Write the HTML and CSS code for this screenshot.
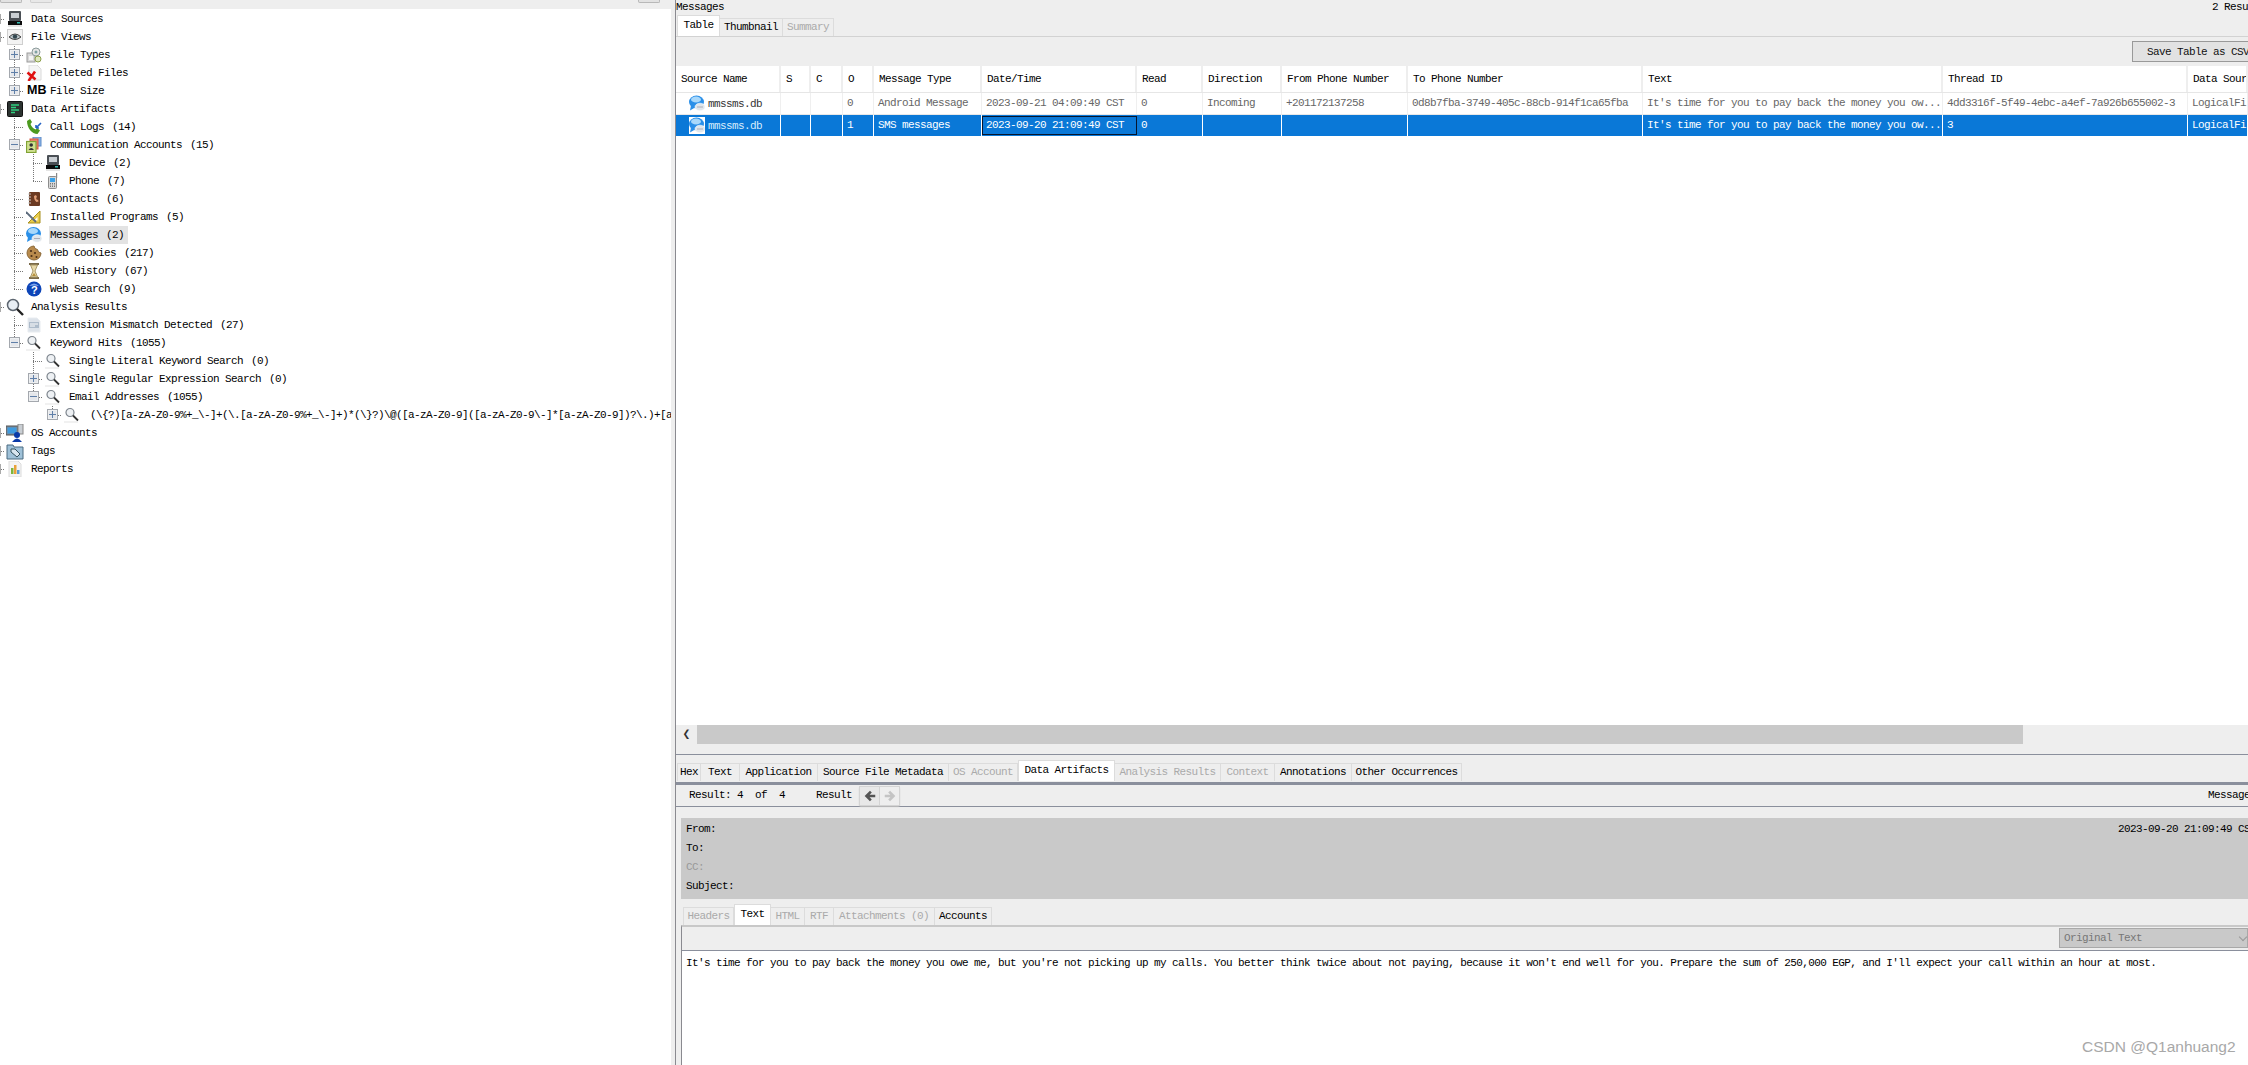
FILE: index.html
```html
<!DOCTYPE html>
<html lang="en">
<head>
<meta charset="utf-8">
<title>Autopsy - Messages</title>
<link rel="stylesheet" href="styles.css">
</head>
<body>
<svg class="defs" width="0" height="0" aria-hidden="true">
  <symbol id="i-drive" viewBox="0 0 16 16"><rect x="2" y="0" width="12" height="10" rx="1" fill="#4a4f55"/><rect x="4" y="2" width="8" height="5" fill="#c9ced3"/><path d="M1 10h14v4H1z" fill="#0c0c0c"/><rect x="10" y="11" width="3" height="1.5" fill="#35b8b0"/><rect x="1" y="14" width="14" height="2" fill="#e4e4e4"/></symbol>
  <symbol id="i-eye" viewBox="0 0 16 16"><rect x=".5" y=".5" width="15" height="15" fill="#f3f3f3" stroke="#cfcfcf"/><path d="M2 8q6-6 12 0q-6 5-12 0z" fill="#b9c4c9" stroke="#444"/><circle cx="8" cy="7.6" r="2.2" fill="#33474f"/></symbol>
  <symbol id="i-types" viewBox="0 0 16 16"><rect x="1" y="6" width="8" height="9" fill="#d8d8d8" stroke="#9b9b9b"/><circle cx="10" cy="5" r="4" fill="#e5e5e5" stroke="#8a9a9a"/><circle cx="10" cy="5" r="1.5" fill="#7fa2a2"/><circle cx="12" cy="12" r="3" fill="#dfe8c0" stroke="#8ca04a"/><rect x="3" y="9" width="4" height="4" fill="#f4f4f4"/></symbol>
  <symbol id="i-del" viewBox="0 0 16 16"><path d="M3 0h8l4 4v11H3z" fill="#f5f5f5" stroke="#dadada"/><path d="M1.5 7.5l8 7M9 6.500L2.500 16" stroke="#e01010" stroke-width="2.600" fill="none"/></symbol>
  <symbol id="i-art" viewBox="0 0 16 16"><rect x=".5" y=".5" width="15" height="15" rx="1" fill="#2c3330" stroke="#111"/><path d="M4 4h8M4 6.500h5M4 9h8M4 11.500h4" stroke="#2fd07f" stroke-width="1.400"/></symbol>
  <symbol id="i-call" viewBox="0 0 16 16"><path d="M1 2l3-2 2 3-1.500 2c.8 2.500 2.500 4.500 5 5.500L11 9l3 2.500-2.500 3.500C6 15 1 9 1 2z" fill="#4c9a1f"/><path d="M15 4l-5 5M10 9V6M10 9h3" stroke="#2563c4" stroke-width="1.600" fill="none"/></symbol>
  <symbol id="i-comm" viewBox="0 0 16 16"><rect x="7" y="0" width="8" height="9" fill="#8ab4e8" stroke="#5f8cc7"/><rect x="4" y="2" width="8" height="10" fill="#f07f6a" stroke="#d6563f"/><rect x=".5" y="4.500" width="9.500" height="11" fill="#cfe08f" stroke="#80a234" stroke-width="1.200"/><circle cx="5.200" cy="8" r="1.800" fill="#333"/><path d="M2.500 13q2.700-4 5.500 0z" fill="#333"/></symbol>
  <symbol id="i-phone" viewBox="0 0 16 16"><rect x="3.500" y="3.500" width="8" height="12" rx="1" fill="#d8d8d8" stroke="#8c8c8c"/><rect x="11" y="0" width="1.200" height="5" fill="#888"/><rect x="5" y="5" width="5" height="4" fill="#3aa2ea"/><path d="M5 10.500h5M5 12h5M5 13.500h5" stroke="#777" stroke-dasharray="1 1"/></symbol>
  <symbol id="i-book" viewBox="0 0 16 16"><rect x="3" y="1" width="11" height="14" rx="1" fill="#6b3a22"/><path d="M2 3h3M2 6h3M2 9h3M2 12h3" stroke="#ccc"/><path d="M8 5l2-1 1 2-1 1 1 2 1-.5.5 2-2 .5C9 10 8 8 8 5z" fill="#e3a179"/></symbol>
  <symbol id="i-inst" viewBox="0 0 16 16"><path d="M14 2v12H2z" fill="#e8cc4a" stroke="#a88f1d"/><path d="M11.500 8v3.500H8z" fill="#fff"/><path d="M0 3l10 10" stroke="#5c6b7c" stroke-width="1.800"/></symbol>
  <symbol id="i-msg" viewBox="0 0 16 16"><ellipse cx="7.500" cy="6.500" rx="7.500" ry="6.500" fill="#2a8fe8"/><ellipse cx="7" cy="4" rx="5" ry="3" fill="#a8d8fb"/><path d="M2 10l-1 5 5-3z" fill="#2a8fe8"/><ellipse cx="11" cy="11.500" rx="5" ry="3.800" fill="#dfe6ec" stroke="#fff" stroke-width=".6"/><path d="M8.500 11.500h1M10.500 11.500h1M12.500 11.500h1" stroke="#778"/></symbol>
  <symbol id="i-cookie" viewBox="0 0 16 16"><path d="M8 1a7 7 0 1 0 7 7l-2.500-1-1-2.500L9 3.500z" fill="#b88a4c" stroke="#8c6a3a"/><circle cx="5" cy="6" r="1.100" fill="#4a2f18"/><circle cx="9" cy="8" r="1.100" fill="#4a2f18"/><circle cx="5.500" cy="11" r="1.100" fill="#4a2f18"/><circle cx="10.500" cy="12" r="1" fill="#4a2f18"/></symbol>
  <symbol id="i-glass" viewBox="0 0 16 16"><path d="M3 1h10M3 15h10" stroke="#7a6a4a" stroke-width="2"/><path d="M4.500 2h7L9 8l2.500 6h-7L7 8z" fill="#e8d9aa" stroke="#a89767"/><path d="M6 13h4L8 10z" fill="#b58f3c"/></symbol>
  <symbol id="i-help" viewBox="0 0 16 16"><circle cx="8" cy="8" r="7.500" fill="#0d45b8"/><path d="M3 5q5-5 10 0q-5-1-10 0z" fill="#7ea6ec"/><text x="8" y="12.500" text-anchor="middle" font-family="Liberation Sans" font-weight="700" font-size="11" fill="#fff">?</text></symbol>
  <symbol id="i-mag" viewBox="0 0 18 18"><circle cx="7" cy="7" r="5.500" fill="#e8eef4" stroke="#5d6670" stroke-width="1.500"/><path d="M11 11l6 6" stroke="#222" stroke-width="2.400"/></symbol>
  <symbol id="i-ext" viewBox="0 0 16 16"><path d="M2 1h9l3 3v11H2z" fill="#dde3ea" stroke="#e8ecf0"/><rect x="3" y="5" width="10" height="6" fill="#aebccb"/><path d="M4 7h8M4 9h5" stroke="#fff"/></symbol>
  <symbol id="i-kw" viewBox="0 0 16 16"><circle cx="6" cy="5.500" r="4" fill="#eef1f4" stroke="#7d858d" stroke-width="1.200"/><path d="M9 8.500l5 5" stroke="#333" stroke-width="1.800"/><path d="M0 15h14" stroke="#ececec" stroke-width="1.500"/></symbol>
  <symbol id="i-os" viewBox="0 0 18 18"><rect x="0" y="2" width="12" height="9" fill="#7a8a9a" stroke="#555"/><rect x="1.500" y="3.500" width="9" height="6" fill="#3f9be0"/><rect x="12" y="0" width="5" height="10" fill="#c9ced3" stroke="#888"/><circle cx="11" cy="11" r="3" fill="#0a3aa8"/><path d="M6 18q5-7 10 0z" fill="#0a3aa8"/></symbol>
  <symbol id="i-tag" viewBox="0 0 18 18"><path d="M1 3h6l1 2h9v12H1z" fill="#9fc1d8" stroke="#4a6a80"/><path d="M5 7h4l5 5-3 3-6-5z" fill="#d7e5ef" stroke="#33505f"/></symbol>
  <symbol id="i-rep" viewBox="0 0 16 16"><path d="M2 0h9l3 3v13H2z" fill="#f4f4f4" stroke="#dcdcdc"/><rect x="4" y="7" width="2.500" height="6" fill="#7fb53c"/><rect x="7" y="4" width="2.500" height="9" fill="#e9a23a"/><rect x="10" y="9" width="2.500" height="4" fill="#5a9bd5"/></symbol>
  <symbol id="i-back" viewBox="0 0 16 16"><path d="M14 8H5M9 3L4 8l5 5" stroke="currentColor" stroke-width="3" fill="none"/></symbol>
  <symbol id="i-next" viewBox="0 0 16 16"><path d="M2 8h9M7 3l5 5-5 5" stroke="currentColor" stroke-width="3" fill="none"/></symbol>
</svg>

<div class="app">
  <aside class="left">
    <div class="left-top">
      <span class="stub"></span><span class="stub stub-b"></span><span class="stub stub-r"></span>
    </div>
    <div class="tree">
      <div class="row"><i class="c0 h"></i><svg class="ico"><use href="#i-drive"/></svg><span>Data Sources</span></div>
      <div class="row"><i class="c0 h"></i><svg class="ico"><use href="#i-eye"/></svg><span>File Views</span></div>
      <div class="row"><i class="c0"></i><i class="c t"><b class="exp plus"></b></i><svg class="ico"><use href="#i-types"/></svg><span>File Types</span></div>
      <div class="row"><i class="c0"></i><i class="c t"><b class="exp plus"></b></i><svg class="ico"><use href="#i-del"/></svg><span>Deleted Files</span></div>
      <div class="row"><i class="c0"></i><i class="c l"><b class="exp plus"></b></i><b class="mb">MB</b><span>File Size</span></div>
      <div class="row"><i class="c0 h"></i><svg class="ico"><use href="#i-art"/></svg><span>Data Artifacts</span></div>
      <div class="row"><i class="c0"></i><i class="c t"></i><svg class="ico"><use href="#i-call"/></svg><span>Call Logs <em>(14)</em></span></div>
      <div class="row"><i class="c0"></i><i class="c t"><b class="exp minus"></b></i><svg class="ico"><use href="#i-comm"/></svg><span>Communication Accounts <em>(15)</em></span></div>
      <div class="row"><i class="c0"></i><i class="c v"></i><i class="c t"></i><svg class="ico"><use href="#i-drive"/></svg><span>Device <em>(2)</em></span></div>
      <div class="row"><i class="c0"></i><i class="c v"></i><i class="c l"></i><svg class="ico"><use href="#i-phone"/></svg><span>Phone <em>(7)</em></span></div>
      <div class="row"><i class="c0"></i><i class="c t"></i><svg class="ico"><use href="#i-book"/></svg><span>Contacts <em>(6)</em></span></div>
      <div class="row"><i class="c0"></i><i class="c t"></i><svg class="ico"><use href="#i-inst"/></svg><span>Installed Programs <em>(5)</em></span></div>
      <div class="row"><i class="c0"></i><i class="c t"></i><svg class="ico"><use href="#i-msg"/></svg><span class="sel">Messages <em>(2)</em></span></div>
      <div class="row"><i class="c0"></i><i class="c t"></i><svg class="ico"><use href="#i-cookie"/></svg><span>Web Cookies <em>(217)</em></span></div>
      <div class="row"><i class="c0"></i><i class="c t"></i><svg class="ico"><use href="#i-glass"/></svg><span>Web History <em>(67)</em></span></div>
      <div class="row"><i class="c0"></i><i class="c l"></i><svg class="ico"><use href="#i-help"/></svg><span>Web Search <em>(9)</em></span></div>
      <div class="row"><i class="c0 h"></i><svg class="ico ico-lg"><use href="#i-mag"/></svg><span>Analysis Results</span></div>
      <div class="row"><i class="c0"></i><i class="c t"></i><svg class="ico"><use href="#i-ext"/></svg><span>Extension Mismatch Detected <em>(27)</em></span></div>
      <div class="row"><i class="c0"></i><i class="c l"><b class="exp minus"></b></i><svg class="ico"><use href="#i-kw"/></svg><span>Keyword Hits <em>(1055)</em></span></div>
      <div class="row"><i class="c0"></i><i class="c"></i><i class="c t"></i><svg class="ico"><use href="#i-kw"/></svg><span>Single Literal Keyword Search <em>(0)</em></span></div>
      <div class="row"><i class="c0"></i><i class="c"></i><i class="c t"><b class="exp plus"></b></i><svg class="ico"><use href="#i-kw"/></svg><span>Single Regular Expression Search <em>(0)</em></span></div>
      <div class="row"><i class="c0"></i><i class="c"></i><i class="c l"><b class="exp minus"></b></i><svg class="ico"><use href="#i-kw"/></svg><span>Email Addresses <em>(1055)</em></span></div>
      <div class="row"><i class="c0"></i><i class="c"></i><i class="c"></i><i class="c l"><b class="exp plus"></b></i><svg class="ico"><use href="#i-kw"/></svg><span class="regex">(\{?)[a-zA-Z0-9%+_\-]+(\.[a-zA-Z0-9%+_\-]+)*(\}?)\@([a-zA-Z0-9]([a-zA-Z0-9\-]*[a-zA-Z0-9])?\.)+[a-zA-Z]{2,4}</span></div>
      <div class="row"><i class="c0 h"></i><svg class="ico ico-lg"><use href="#i-os"/></svg><span>OS Accounts</span></div>
      <div class="row"><i class="c0 h"></i><svg class="ico ico-lg"><use href="#i-tag"/></svg><span>Tags</span></div>
      <div class="row"><i class="c0 h"></i><svg class="ico"><use href="#i-rep"/></svg><span>Reports</span></div>
    </div>
  </aside>

  <main class="right">
    <div class="title"><span class="title-l">Messages</span><span>2 Results</span></div>
    <div class="tabs tabs-top">
      <span class="tab on">Table</span><span class="tab">Thumbnail</span><span class="tab off">Summary</span>
    </div>
    <div class="savebar"><button class="save" type="button">Save Table as CSV</button></div>

    <div class="table">
      <div class="tr th">
        <span>Source Name</span><span>S</span><span>C</span><span>O</span><span>Message Type</span><span>Date/Time</span><span>Read</span><span>Direction</span><span>From Phone Number</span><span>To Phone Number</span><span>Text</span><span>Thread ID</span><span>Data Source</span>
      </div>
      <div class="tr td">
        <span class="src"><svg class="ico-cell"><use href="#i-msg"/></svg>mmssms.db</span><span></span><span></span><span>0</span><span>Android Message</span><span>2023-09-21 04:09:49 CST</span><span>0</span><span>Incoming</span><span>+201172137258</span><span>0d8b7fba-3749-405c-88cb-914f1ca65fba</span><span>It's time for you to pay back the money you ow...</span><span>4dd3316f-5f49-4ebc-a4ef-7a926b655002-3</span><span>LogicalFileSet1</span>
      </div>
      <div class="tr td picked">
        <span class="src"><svg class="ico-cell"><use href="#i-msg"/></svg>mmssms.db</span><span></span><span></span><span>1</span><span>SMS messages</span><span class="focus">2023-09-20 21:09:49 CST</span><span>0</span><span></span><span></span><span></span><span>It's time for you to pay back the money you ow...</span><span>3</span><span>LogicalFileSet1</span>
      </div>
    </div>

    <div class="hscroll"><span class="arrow">&#10094;</span><span class="thumb"></span></div>
    <div class="split"></div>

    <div class="tabs tabs-mid">
      <span class="tab w24">Hex</span><span class="tab w39">Text</span><span class="tab w78">Application</span><span class="tab w131">Source File Metadata</span><span class="tab w69 off">OS Account</span><span class="tab w97 on">Data Artifacts</span><span class="tab w106 off">Analysis Results</span><span class="tab w54 off">Context</span><span class="tab w77">Annotations</span><span class="tab w110">Other Occurrences</span>
    </div>

    <div class="resbar">
      <span class="res">Result: 4  of  4</span>
      <span class="res-b">Result</span>
      <span class="nav"><span class="nav-b"><svg class="nav-i"><use href="#i-back"/></svg></span><span class="nav-n"><svg class="nav-i"><use href="#i-next"/></svg></span></span>
      <span class="res-r">Messages</span>
    </div>

    <div class="lower">
      <div class="mhead">
        <div class="mline mline-top"><span class="mfrom">From:</span><span>2023-09-20 21:09:49 CST</span></div>
        <div class="mline">To:</div>
        <div class="mline mute">CC:</div>
        <div class="mline">Subject:</div>
      </div>
      <div class="tabs tabs-low">
        <span class="tab w51 off">Headers</span><span class="tab w37 on">Text</span><span class="tab w34 off">HTML</span><span class="tab w29 off">RTF</span><span class="tab w101 off">Attachments (0)</span><span class="tab w57">Accounts</span>
      </div>
      <div class="viewer">
        <div class="viewbar"><span class="combo">Original Text<span class="caret"></span></span></div>
        <div class="body-text">It's time for you to pay back the money you owe me, but you're not picking up my calls. You better think twice about not paying, because it won't end well for you. Prepare the sum of 250,000 EGP, and I'll expect your call within an hour at most.</div>
      </div>
    </div>
  </main>
</div>
<div class="mark">CSDN @Q1anhuang2</div>
</body>
</html>
```
FILE: styles.css
```css
html, body {
  margin: 0;
  height: 100%;
  overflow: hidden;
  background: #eee;
}
body {
  font-family: "Liberation Mono", "Noto Sans CJK SC", monospace;
  font-size: 11px;
  letter-spacing: -0.6px;
  color: #000;
}
.defs { position: absolute; }
.app {
  display: flex;
  width: 2248px;
  height: 1065px;
}

/* ---------- left tree ---------- */
.left {
  flex: none;
  width: 676px;
  box-sizing: border-box;
  padding-right: 4px;
  border-right: 1px solid #8a8a90;
  height: 100%;
  display: flex;
  flex-direction: column;
}
.left-top {
  height: 9px;
  flex: none;
  display: flex;
  align-items: flex-start;
  gap: 8px;
}
.stub {
  width: 20px;
  height: 2px;
  background: #e2e2e2;
  border: 1px solid #b8b8b8;
  border-top: 0;
  border-radius: 0 0 2px 2px;
}
.stub-b { background: #e8e8e8; border-color: #cfcfcf; }
.stub-r { margin-left: auto; margin-right: 11px; }
.tree {
  flex: 1;
  background: #fff;
  padding-top: 1px;
  overflow: hidden;
}
.row {
  display: flex;
  align-items: center;
  height: 18px;
  white-space: nowrap;
}
.row em { font-style: normal; margin-left: 2px; }
.ico {
  flex: none;
  width: 16px;
  height: 16px;
  margin: 0 8px 0 2px;
}
.ico-lg {
  width: 18px;
  height: 18px;
  margin: 0 7px 0 1px;
}
.mb {
  flex: none;
  width: 23px;
  margin: -2px 0 0 3px;
  font: bold 12.5px "Liberation Sans", sans-serif;
  letter-spacing: 0;
  color: #000;
}
.sel {
  background: #e3e3e3;
  margin-left: -1px;
  padding: 3px 4px 3px 1px;
}
.regex { margin-left: 2px; }

/* tree guide cells */
.c0 { flex: none; width: 5px; height: 18px; }
.c0.h {
  background:
    linear-gradient(#aaa, #aaa) 0 4px / 1px 10px no-repeat,
    repeating-linear-gradient(90deg, #777 0 1px, transparent 1px 2px) 1px 9px / 4px 1px no-repeat;
}
.c {
  flex: none;
  box-sizing: border-box;
  width: 19px;
  height: 18px;
  padding: 3px 0 0 4px;
}
.v {
  background: repeating-linear-gradient(180deg, #777 0 1px, transparent 1px 2px) 9px 0 / 1px 18px no-repeat;
}
.t {
  background:
    repeating-linear-gradient(180deg, #777 0 1px, transparent 1px 2px) 9px 0 / 1px 18px no-repeat,
    repeating-linear-gradient(90deg, #777 0 1px, transparent 1px 2px) 9px 9px / 10px 1px no-repeat;
}
.l {
  background:
    repeating-linear-gradient(180deg, #777 0 1px, transparent 1px 2px) 9px 0 / 1px 9px no-repeat,
    repeating-linear-gradient(90deg, #777 0 1px, transparent 1px 2px) 9px 9px / 10px 1px no-repeat;
}
.exp {
  display: block;
  box-sizing: border-box;
  width: 11px;
  height: 11px;
  border: 1px solid #a4a8ae;
  box-shadow: inset 0 0 0 1px #eef0f2;
  background-color: #e4e6ea;
}
.minus {
  background-image: linear-gradient(#5f7fa8, #5f7fa8);
  background-position: center;
  background-size: 7px 1px;
  background-repeat: no-repeat;
}
.plus {
  background-image: linear-gradient(#5f7fa8, #5f7fa8), linear-gradient(#5f7fa8, #5f7fa8);
  background-position: center, center;
  background-size: 7px 1px, 1px 7px;
  background-repeat: no-repeat;
}

/* ---------- right column ---------- */
.right {
  flex: none;
  width: 1572px;
  height: 100%;
  display: flex;
  flex-direction: column;
  overflow: hidden;
  white-space: nowrap;
}
.title {
  flex: none;
  height: 15px;
  line-height: 14px;
  display: flex;
}
.title-l { flex: none; width: 1536px; }

.tabs {
  flex: none;
  display: flex;
  align-items: flex-end;
}
.tab {
  flex: none;
  box-sizing: border-box;
  height: 18px;
  line-height: 17px;
  text-align: center;
  background: #eee;
  border: 1px solid #dcdcdc;
  border-bottom: 0;
  border-left: 0;
}
.tab.on {
  height: 21px;
  line-height: 19px;
  background: #fff;
  border-left: 1px solid #dcdcdc;
}
.tab.off { color: #aaa; }
.tabs-top {
  height: 21px;
  padding-left: 1px;
  border-bottom: 1px solid #d2d2d2;
}
.tabs-top .tab { width: 63px; }
.tabs-top .tab.on { width: 43px; }
.tabs-top .tab.off { width: 51px; }

.savebar {
  flex: none;
  box-sizing: border-box;
  height: 29px;
  padding: 4px 0 0 1456px;
}
.save {
  display: block;
  width: 140px;
  height: 21px;
  padding: 0 0 0 14px;
  text-align: left;
  font: inherit;
  letter-spacing: inherit;
  color: #111;
  background: #e2e2e2;
  border: 1px solid #999;
}

.table {
  flex: none;
  height: 659px;
  background: #fff;
}
.tr {
  display: grid;
  grid-template-columns: 105px 30px 32px 31px 108px 155px 66px 79px 126px 235px 300px 245px 60px;
}
.tr > span {
  box-sizing: border-box;
  overflow: hidden;
  padding-left: 4px;
}
.th {
  height: 27px;
  line-height: 27px;
  border-bottom: 1px solid #e6e6e6;
  box-sizing: border-box;
}
.th > span {
  padding-left: 5px;
  border-right: 2px solid #eee;
}
.td {
  box-sizing: border-box;
  height: 22px;
  line-height: 20px;
  color: #666;
  border-bottom: 1px solid #e8e8e8;
}
.td > span { border-right: 1px solid #efefef; }
.src {
  display: flex;
  align-items: center;
}
.tr > .src { padding-left: 13px; color: #333; }
.ico-cell {
  flex: none;
  width: 16px;
  height: 17px;
  margin-right: 3px;
}
.picked {
  height: 21px;
  line-height: 20px;
  background: #0a78d7;
  color: #fff;
  border: 0;
}
.picked > span { border-right-color: #fff; }
.tr.picked > .src { color: #d8ecfb; }
.picked .ico-cell { background: #fff; }
.tr > .focus {
  margin: 1px 0;
  height: 19px;
  line-height: 17px;
  padding-left: 3px;
  border: 1px solid #06152c;
}

.hscroll {
  flex: none;
  height: 19px;
  display: flex;
}
.arrow {
  flex: none;
  width: 21px;
  line-height: 19px;
  text-align: center;
  font-size: 13px;
  letter-spacing: 0;
  color: #333;
}
.thumb {
  flex: none;
  width: 1326px;
  height: 19px;
  background: #c9c9c9;
}
.split {
  flex: none;
  height: 11px;
  box-sizing: border-box;
  border-bottom: 1px solid #8a8f9c;
}
.tabs-mid {
  height: 21px;
  margin-top: 5px;
  padding-left: 1px;
}
.w24 { width: 24px; border-left: 1px solid #dcdcdc; }
.w39 { width: 39px; }
.w78 { width: 78px; }
.w131 { width: 131px; }
.w69 { width: 69px; }
.w97 { width: 97px; }
.w106 { width: 106px; }
.w54 { width: 54px; }
.w77 { width: 77px; }
.w110 { width: 110px; }
.w51 { width: 51px; }
.w37 { width: 37px; }
.w34 { width: 34px; }
.w29 { width: 29px; }
.w101 { width: 101px; }
.w57 { width: 57px; }

.resbar {
  flex: none;
  box-sizing: border-box;
  height: 25px;
  margin-top: 1px;
  padding-bottom: 2px;
  border-top: 3px solid #8a8f9c;
  border-bottom: 1px solid #8a8f9c;
  display: flex;
  align-items: center;
}
.res {
  flex: none;
  width: 109px;
  padding-left: 13px;
  white-space: pre;
}
.res-b { flex: none; width: 43px; margin-left: -13px; padding-left: 31px; }
.nav {
  flex: none;
  display: flex;
  width: 41px;
  height: 20px;
  margin-top: 2px;
  border-radius: 2px;
  box-shadow: 0 1px 1px #bbb;
}
.nav-b, .nav-n {
  flex: none;
  box-sizing: border-box;
  width: 21px;
  height: 20px;
  display: flex;
  align-items: center;
  justify-content: center;
  background: #e8e8e8;
  border: 1px solid #d4d4d4;
  color: #555;
}
.nav-n { width: 20px; border-left: 0; background: #eee; color: #c4c4c4; }
.nav-i { width: 14px; height: 14px; }
.res-r { flex: none; margin-left: 1308px; }

.lower {
  flex: 1;
  display: flex;
  flex-direction: column;
  padding: 11px 0 0 5px;
  min-height: 0;
}
.mhead {
  flex: none;
  box-sizing: border-box;
  height: 81px;
  padding: 2px 0 0 5px;
  background: #c9c9c9;
}
.mline { height: 19px; line-height: 18px; }
.mline-top { display: flex; }
.mfrom { flex: none; width: 1432px; }
.mute { color: #999; }
.tabs-low {
  height: 21px;
  margin-top: 5px;
  padding-left: 2px;
}
.tabs-low .tab:first-child { border-left: 1px solid #dcdcdc; }
.viewer {
  flex: 1;
  display: flex;
  flex-direction: column;
  border-left: 1px solid #8a8a90;
  border-top: 2px solid #c8c8c8;
}
.viewbar {
  flex: none;
  box-sizing: border-box;
  height: 24px;
  padding: 1px 0 0 1377px;
  border-bottom: 1px solid #8a8f9c;
}
.combo {
  display: block;
  box-sizing: border-box;
  position: relative;
  width: 189px;
  height: 20px;
  line-height: 18px;
  padding-left: 4px;
  color: #777;
  background: #c9c9c9;
  border: 1px solid #a8a8a8;
}
.caret {
  position: absolute;
  right: 1px;
  top: 5px;
  width: 5px;
  height: 5px;
  border-right: 1px solid #999;
  border-bottom: 1px solid #999;
  transform: rotate(45deg);
}
.body-text {
  flex: 1;
  background: #fff;
  padding: 5px 0 0 4px;
  line-height: 14px;
}
.mark {
  position: absolute;
  left: 2082px;
  top: 1037px;
  font: 15.500px/20px "Liberation Sans", sans-serif;
  letter-spacing: 0;
  color: #a8a8a8;
  white-space: nowrap;
}
```
